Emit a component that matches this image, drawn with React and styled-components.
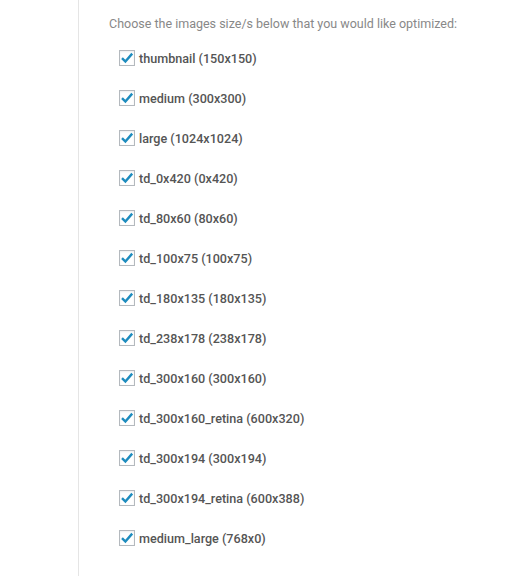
import styled, { createGlobalStyle } from "styled-components";

const sizes = [
  "thumbnail (150x150)",
  "medium (300x300)",
  "large (1024x1024)",
  "td_0x420 (0x420)",
  "td_80x60 (80x60)",
  "td_100x75 (100x75)",
  "td_180x135 (180x135)",
  "td_238x178 (238x178)",
  "td_300x160 (300x160)",
  "td_300x160_retina (600x320)",
  "td_300x194 (300x194)",
  "td_300x194_retina (600x388)",
  "medium_large (768x0)",
];

const GlobalStyle = createGlobalStyle`
  body {
    margin: 0;
    background: #fff;
    font-family: Roboto, "Liberation Sans", sans-serif;
  }
`;

const App = () => {
  return (
    <Page>
      <GlobalStyle />
      <Panel>
        <Intro>Choose the images size/s below that you would like optimized:</Intro>
        <SizeList>
          {sizes.map((size) => (
            <SizeRow key={size}>
              <Box>
                <svg width="14" height="14" viewBox="0 0 14 14">
                  <path
                    d="M2 7.2 L5.4 10.6 L12.2 2.6"
                    fill="none"
                    stroke="#1e8cbe"
                    strokeWidth="2.4"
                  />
                </svg>
              </Box>
              <Label>{size}</Label>
            </SizeRow>
          ))}
        </SizeList>
      </Panel>
    </Page>
  );
};

const Page = styled.div`
  width: 505px;
  height: 576px;
  padding-left: 78px;
  box-sizing: border-box;
  overflow: hidden;
`;

const Panel = styled.div`
  height: 100%;
  border-left: 1px solid #e5e5e5;
  padding: 16px 0 0 30px;
`;

const Intro = styled.p`
  margin: 0;
  font-size: 12.5px;
  line-height: 16px;
  color: #888;
`;

const SizeList = styled.div`
  display: flex;
  flex-direction: column;
  gap: 24px;
  padding: 18px 0 0 10px;
`;

const SizeRow = styled.label`
  display: flex;
  align-items: center;
  gap: 4px;
  height: 16px;
`;

const Box = styled.span`
  width: 14px;
  height: 14px;
  border: 1px solid #b4b9be;
  background: #fff;
  display: flex;
  align-items: center;
  justify-content: center;
  box-shadow: inset 0 1px 2px rgba(0, 0, 0, 0.08);
`;

const Label = styled.span`
  font-size: 12.6px;
  font-weight: 500;
  color: #555;
`;

export default App;
